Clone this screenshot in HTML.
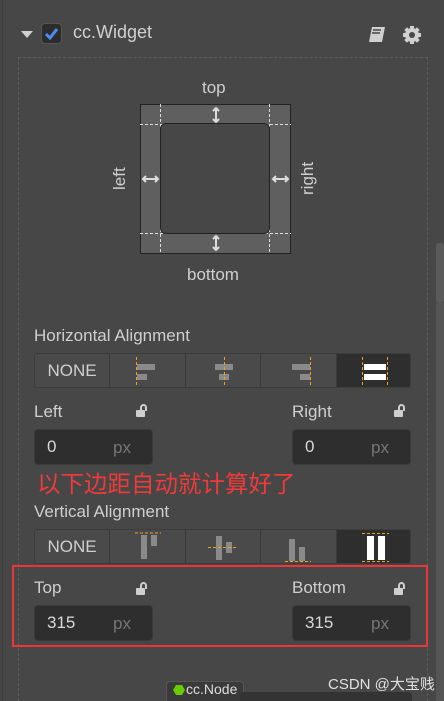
<!DOCTYPE html><html style="overflow:hidden;height:701px"><head><style>
body{margin:0;width:444px;height:701px;background:#474747;font-family:"Liberation Sans","Noto Sans CJK SC",sans-serif;color:#cfcfcf;position:relative;overflow:hidden}
.a{position:absolute}
.seg{position:absolute;top:0;height:35px;border-right:1px solid #3a3a3a;box-sizing:border-box}
.grp{position:absolute;left:34px;width:377px;height:35px;border:1px solid #3c3c3c;border-radius:3px;background:#4a4a4a;box-sizing:border-box;overflow:hidden}
.inp{position:absolute;width:119px;height:36px;background:#2e2e2e;border:1px solid #3a3a3a;border-radius:4px;box-sizing:border-box}
.inp b{position:absolute;left:12px;top:7px;font-weight:normal;font-size:17px;color:#d8d8d8}
.inp i{position:absolute;left:78px;top:8px;font-style:normal;font-size:17px;color:#777}
.lbl{position:absolute;font-size:17px;color:#cfcfcf}
.lock{position:absolute;width:9px;height:7px;background:#cfcfcf;border-radius:1px}
.lock:before{content:"";position:absolute;left:4px;top:-6px;width:7px;height:7px;border:2px solid #cfcfcf;border-bottom:none;border-radius:4px 4px 0 0;box-sizing:border-box}
</style></head><body>
<div class="a" style="left:2px;top:0;width:1px;height:701px;background:#3e3e3e"></div>
<div class="a" style="left:436px;top:243px;width:8px;height:60px;background:#5a5a5a;border-radius:3px"></div>
<div class="a" style="left:436px;top:303px;width:8px;height:398px;background:#555"></div>
<div class="a" style="left:21px;top:31px;width:0;height:0;border-left:6px solid transparent;border-right:6px solid transparent;border-top:7px solid #cfcfcf"></div>
<div class="a" style="left:41px;top:23px;width:21px;height:21px;background:#2c2c2c;border:1px solid #555;border-radius:4px;box-sizing:border-box"></div>
<svg class="a" style="left:41px;top:23px" width="21" height="21"><path d="M5 11l4 4 7-9" stroke="#4a8cf0" stroke-width="3" fill="none"/></svg>
<div class="a" style="left:73px;top:22px;font-size:18px;color:#d0d0d0">cc.Widget</div>
<svg class="a" style="left:367px;top:26px" width="20" height="18"><path d="M5 1h13l-3 15H2z" fill="#d0d0d0"/><path d="M6 4h8M5 7h8" stroke="#474747" stroke-width="1.5"/></svg>
<svg class="a" style="left:402px;top:25px" width="20" height="20" viewBox="0 0 20 20"><g fill="#d0d0d0"><circle cx="10" cy="10" r="7"/><rect x="8" y="1" width="4" height="18"/><rect x="1" y="8" width="18" height="4"/><rect x="8" y="1" width="4" height="18" transform="rotate(45 10 10)"/><rect x="8" y="1" width="4" height="18" transform="rotate(-45 10 10)"/></g><circle cx="10" cy="10" r="3" fill="#474747"/></svg>
<div class="a" style="left:18px;top:57px;width:410px;height:644px;border:1px dashed #5c5c5c;border-bottom:none;box-sizing:border-box"></div>
<div class="a" style="left:202px;top:78px;font-size:17px">top</div>
<div class="a" style="left:187px;top:265px;font-size:17px">bottom</div>
<div class="a" style="left:110px;top:190px;font-size:17px;transform:rotate(-90deg);transform-origin:left top">left</div>
<div class="a" style="left:298px;top:195px;font-size:17px;transform:rotate(-90deg);transform-origin:left top">right</div>
<div class="a" style="left:140px;top:104px;width:151px;height:150px;background:#5f5f5f;border:1px solid #222;box-sizing:border-box"></div>
<svg class="a" style="left:140px;top:104px" width="151" height="150"><g stroke="#ddd" stroke-dasharray="3 2" stroke-width="1"><path d="M20.5 0v150M129.5 0v150M0 20.5h151M0 129.5h151"/></g></svg>
<div class="a" style="left:160px;top:123px;width:110px;height:111px;background:#474747;border:1px solid #222;border-radius:6px;box-sizing:border-box"></div>
<svg class="a" style="left:140px;top:104px" width="151" height="150"><g stroke="#ddd" stroke-width="2" fill="none"><path d="M76 5v12M73 7l3-3 3 3M73 15l3 3 3-3"/><path d="M76 133v12M73 135l3-3 3 3M73 143l3 3 3-3"/><path d="M4 75h13M6 72l-3 3 3 3M15 72l3 3-3 3"/><path d="M134 75h13M136 72l-3 3 3 3M145 72l3 3-3 3"/></g></svg>
<div class="lbl" style="left:34px;top:326px">Horizontal Alignment</div>
<div class="grp" style="top:353px">
<div class="seg" style="left:0;width:75px;font-size:17px;text-align:center;line-height:33px">NONE</div>
<div class="seg" style="left:75px;width:76px"><svg width="76" height="35"><path d="M26.5 3v30" stroke="#f0a020" stroke-dasharray="3 2"/><rect x="27" y="10" width="18" height="6" fill="#8a8a8a"/><rect x="27" y="20" width="10" height="6" fill="#8a8a8a"/></svg></div>
<div class="seg" style="left:151px;width:75px"><svg width="75" height="35"><rect x="29" y="10" width="18" height="6" fill="#8a8a8a"/><rect x="33" y="20" width="10" height="6" fill="#8a8a8a"/><path d="M38.5 3v30" stroke="#f0a020" stroke-dasharray="3 2"/></svg></div>
<div class="seg" style="left:226px;width:76px"><svg width="76" height="35"><path d="M49.5 3v30" stroke="#f0a020" stroke-dasharray="3 2"/><rect x="31" y="10" width="18" height="6" fill="#8a8a8a"/><rect x="39" y="20" width="10" height="6" fill="#8a8a8a"/></svg></div>
<div class="seg" style="left:302px;width:75px;background:#2e2e2e;border:none"><svg width="75" height="35"><path d="M25.5 3v30M50.5 3v30" stroke="#f0a020" stroke-dasharray="3 2"/><rect x="27" y="10" width="22" height="6" fill="#fff"/><rect x="27" y="20" width="22" height="6" fill="#fff"/></svg></div>
</div>
<div class="lbl" style="left:34px;top:402px">Left</div><div class="lock" style="left:136px;top:410px"></div>
<div class="lbl" style="left:292px;top:402px">Right</div><div class="lock" style="left:394px;top:410px"></div>
<div class="inp" style="left:34px;top:429px"><b>0</b><i>px</i></div>
<div class="inp" style="left:292px;top:429px"><b>0</b><i>px</i></div>
<div class="a" style="left:37px;top:466px;font-size:23.5px;color:#f03a3a;font-family:'Noto Sans CJK SC',sans-serif;line-height:32px">以下边距自动就计算好了</div>
<div class="lbl" style="left:34px;top:502px">Vertical Alignment</div>
<div class="grp" style="top:529px">
<div class="seg" style="left:0;width:75px;font-size:17px;text-align:center;line-height:33px">NONE</div>
<div class="seg" style="left:75px;width:76px"><svg width="76" height="35"><path d="M25 3h26" stroke="#f0a020" stroke-dasharray="3 2"/><rect x="31" y="5" width="6" height="24" fill="#8a8a8a"/><rect x="41" y="5" width="6" height="11" fill="#8a8a8a"/></svg></div>
<div class="seg" style="left:151px;width:75px"><svg width="75" height="35"><rect x="30" y="6" width="6" height="24" fill="#8a8a8a"/><rect x="40" y="12" width="6" height="11" fill="#8a8a8a"/><path d="M22 17.5h29" stroke="#f0a020" stroke-dasharray="3 2"/></svg></div>
<div class="seg" style="left:226px;width:76px"><svg width="76" height="35"><rect x="28" y="9" width="6" height="22" fill="#8a8a8a"/><rect x="38" y="17" width="6" height="14" fill="#8a8a8a"/><path d="M24 31.5h26" stroke="#f0a020" stroke-dasharray="3 2"/></svg></div>
<div class="seg" style="left:302px;width:75px;background:#2e2e2e;border:none"><svg width="75" height="35"><path d="M25 3.5h27M25 31.5h27" stroke="#f0a020" stroke-dasharray="3 2"/><rect x="30" y="6" width="7" height="24" fill="#fff"/><rect x="41" y="6" width="7" height="24" fill="#fff"/></svg></div>
</div>
<div class="a" style="left:12px;top:565px;width:416px;height:82px;border:2px solid #ee3535;box-sizing:border-box"></div>
<div class="lbl" style="left:34px;top:578px">Top</div><div class="lock" style="left:136px;top:588px"></div>
<div class="lbl" style="left:292px;top:578px">Bottom</div><div class="lock" style="left:394px;top:588px"></div>
<div class="inp" style="left:34px;top:605px"><b>315</b><i>px</i></div>
<div class="inp" style="left:292px;top:605px"><b>315</b><i>px</i></div>
<div class="a" style="left:166px;top:681px;width:78px;height:20px;background:#3a3a3a;border:1px solid #555;border-bottom:none;border-radius:4px 4px 0 0;box-sizing:border-box"></div>
<div class="a" style="left:240px;top:692px;width:172px;height:9px;background:#333;border-radius:4px 4px 0 0"></div>
<svg class="a" style="left:173px;top:685px" width="12" height="10"><path d="M3 0h6l3 5-3 5H3L0 5z" fill="#6c0"/></svg>
<div class="a" style="left:186px;top:680px;font-size:14px;color:#ddd;line-height:18px">cc.Node</div>
<div class="a" style="left:328px;top:675px;font-size:15px;color:#e0e0e0;line-height:20px;font-family:'Liberation Sans','Noto Sans CJK SC',sans-serif">CSDN @大宝贱</div>
</body></html>
